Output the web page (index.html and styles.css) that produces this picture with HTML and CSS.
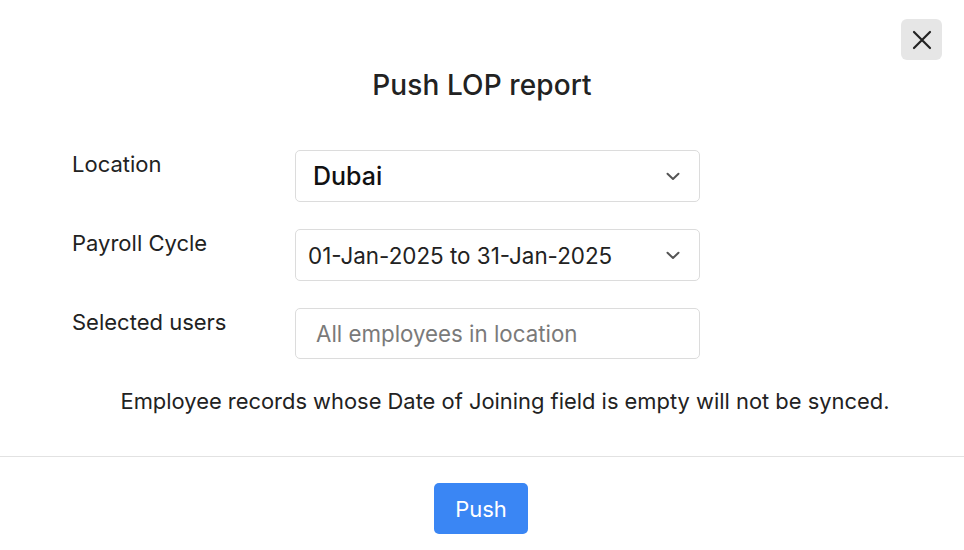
FILE: index.html
```html
<!DOCTYPE html>
<html>
<head>
<meta charset="utf-8">
<link rel="stylesheet" href="styles.css">
</head>
<body>
<div class="modal">
  <div class="top">
    <button class="close" aria-label="Close">
      <svg width="22" height="22" viewBox="0 0 22 22"><path d="M3 3 L19 19 M19 3 L3 19" stroke="#222" stroke-width="2.2" stroke-linecap="round" fill="none"/></svg>
    </button>
  </div>
  <h1 class="title">Push LOP report</h1>
  <div class="form">
    <div class="row">
      <div class="label">Location</div>
      <div class="field select"><span class="value big">Dubai</span><span class="chev"><svg width="14" height="9" viewBox="0 0 14 9"><path d="M1.5 1.8 L7 7 L12.5 1.8" stroke="#555" stroke-width="2" fill="none" stroke-linecap="round" stroke-linejoin="round"/></svg></span></div>
    </div>
    <div class="row">
      <div class="label">Payroll Cycle</div>
      <div class="field select"><span class="value">01-Jan-2025 to 31-Jan-2025</span><span class="chev"><svg width="14" height="9" viewBox="0 0 14 9"><path d="M1.5 1.8 L7 7 L12.5 1.8" stroke="#555" stroke-width="2" fill="none" stroke-linecap="round" stroke-linejoin="round"/></svg></span></div>
    </div>
    <div class="row">
      <div class="label">Selected users</div>
      <div class="field input"><span class="placeholder">All employees in location</span></div>
    </div>
  </div>
  <p class="note">Employee records whose Date of Joining field is empty will not be synced.</p>
  <div class="footer">
    <button class="push">Push</button>
  </div>
</div>
</body>
</html>
```
FILE: styles.css
```css
* { box-sizing: border-box; }
html, body { margin: 0; padding: 0; background: #fff; }
body { font-family: Inter, "Noto Sans", sans-serif; color: #222; width: 964px; height: 550px; overflow: hidden; }
.modal { display: flex; flex-direction: column; }
.top { display: flex; justify-content: flex-end; padding: 19px 22px 0 0; height: 60px; }
.close { width: 41px; height: 41px; border: none; border-radius: 6px; background: #e6e6e6; display: flex; align-items: center; justify-content: center; padding: 0; }
.title { margin: 5px 0 0; text-align: center; font-size: 28px; font-weight: 500; color: #222; line-height: 40px; letter-spacing: 0.1px; }
.form { display: flex; flex-direction: column; gap: 27px; padding: 45px 0 0 72px; }
.row { display: flex; align-items: flex-start; }
.label { width: 223px; font-size: 22px; line-height: 28px; color: #222; }
.field { width: 405px; height: 52px; border: 1px solid #dcdcdc; border-radius: 5px; display: flex; align-items: center; justify-content: space-between; }
.value { font-size: 22.4px; color: #222; padding-left: 12px; }
.value.big { padding-left: 17px; font-size: 25px; font-weight: 500; color: #111; }
.chev { padding-right: 19px; display: flex; }
.placeholder { font-size: 22.3px; color: #7a7a7a; padding-left: 20px; }
.input { height: 51px; }
.note { margin: 27px 0 0; text-align: center; font-size: 21.9px; color: #222; padding-left: 46px; line-height: 30px; }
.footer { margin-top: 40px; border-top: 1.5px solid #e2e2e2; display: flex; justify-content: center; padding-top: 26px; }
.push { width: 94px; height: 51px; border: none; border-radius: 5px; background: #3a86f4; color: #fff; font-family: Inter, sans-serif; font-size: 22px; font-weight: 400; padding: 0; margin-left: -2px; }
```
